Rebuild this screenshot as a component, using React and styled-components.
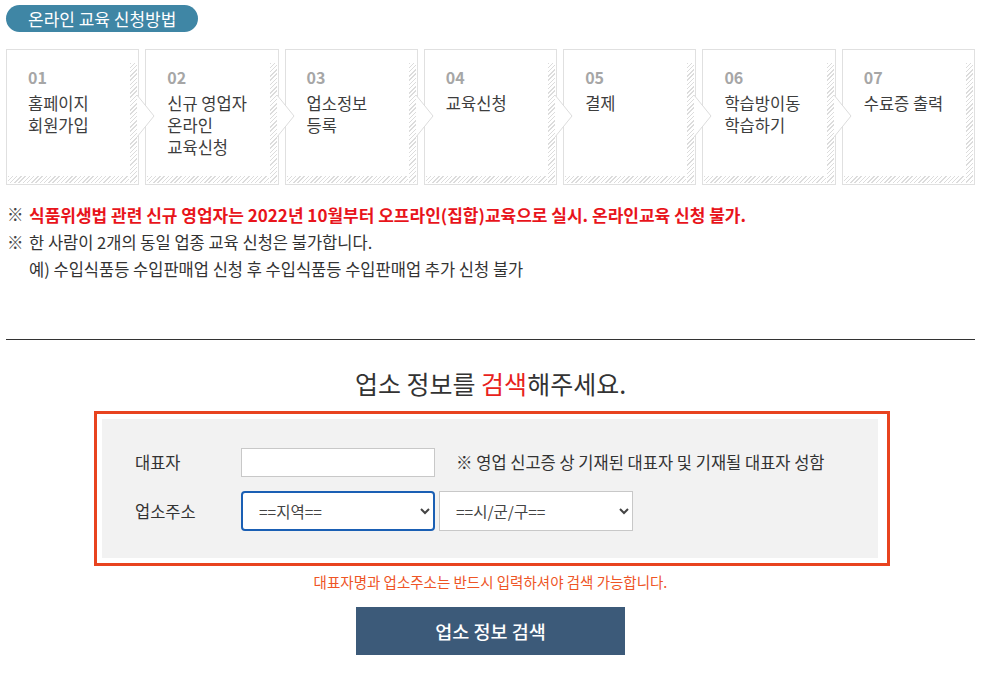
import React from "react"
import styled, { createGlobalStyle } from "styled-components"

const Global = createGlobalStyle`
  body{
    margin: 0;
    background-color: #fff;
    font-family: "Noto Sans CJK KR", "Noto Sans", sans-serif;
    color: #333;
  }
`

const Page = styled.div`
  width: 969px;
  padding: 5px 0 0 6px;
`

const Pill = styled.div`
  display: inline-flex;
  align-items: center;
  height: 27px;
  padding: 0 22px;
  border-radius: 14px;
  background-color: #3f86a5;
  color: #fff;
  font-size: 17px;
`

const Steps = styled.div`
  display: grid;
  grid-template-columns: repeat(7, 1fr);
  column-gap: 6px;
  margin-top: 17px;
`

const Step = styled.div`
  position: relative;
  height: 136px;
  box-sizing: border-box;
  border: 1px solid #e0e0e0;
  padding: 16px 0 0 21px;
  background:
    repeating-linear-gradient(135deg, #dcdcdc 0 1px, transparent 1px 3px) right 1px bottom 1px / 7px 120px no-repeat,
    repeating-linear-gradient(135deg, #dcdcdc 0 1px, transparent 1px 3px) left 1px bottom 1px / calc(100% - 10px) 7px no-repeat,
    #fff;
`

const Num = styled.div`
  font-size: 16px;
  font-weight: 700;
  color: #a6a6a6;
  line-height: 22px;
`

const Label = styled.div`
  margin-top: 4px;
  font-size: 16.5px;
  line-height: 22px;
  color: #3d3d3d;
  white-space: pre-line;
`

const Arrow = styled.svg`
  position: absolute;
  right: -18px;
  top: 45px;
  z-index: 2;
`

const Notes = styled.div`
  margin-top: 16px;
  font-size: 16.5px;
  line-height: 27.5px;
`

const NoteRow = styled.div`
  display: flex;
  color: ${p => (p.$red ? "#e8141b" : "#333")};
  font-weight: ${p => (p.$red ? 700 : 400)};
  font-size: ${p => (p.$red ? "17px" : "16.5px")};
`

const Mark = styled.span`
  width: 22px;
  flex: none;
  padding-left: 1px;
  color: #444;
  font-weight: 400;
  font-size: 16.5px;
`

const Rule = styled.hr`
  margin: 55px 0 0;
  border: 0;
  border-top: 1px solid #333;
`

const Title = styled.h2`
  margin: 27px 0 0;
  text-align: center;
  font-size: 25px;
  font-weight: 400;
  line-height: 33px;
  color: #333;
  span{
    color: #e8221c;
  }
`

const FormFrame = styled.div`
  margin: 11px 0 0 88px;
  width: 796px;
  box-sizing: border-box;
  border: 3px solid #e8431f;
  padding: 5px 9px 5px 5px;
`

const FormBox = styled.div`
  background-color: #f2f2f2;
  padding: 29px 0 27px 33px;
  display: flex;
  flex-direction: column;
  gap: 14px;
`

const Row = styled.div`
  display: flex;
  align-items: center;
`

const FieldLabel = styled.div`
  width: 106px;
  font-size: 16.5px;
  color: #333;
`

const TextInput = styled.input`
  width: 194px;
  height: 29px;
  box-sizing: border-box;
  border: 1px solid #c8c8c8;
  background: #fff;
  outline: none;
`

const Hint = styled.div`
  margin-left: 21px;
  font-size: 16.5px;
  color: #333;
`

const Select = styled.select`
  width: 194px;
  height: 40px;
  box-sizing: border-box;
  margin-right: 4px;
  padding: 0 10px 0 12px;
  border: ${p => (p.$active ? "2px solid #1a5fb4" : "1px solid #c8c8c8")};
  border-radius: ${p => (p.$active ? "4px" : "0")};
  background-color: #fff;
  font-family: "Noto Sans CJK KR", sans-serif;
  font-size: 15.5px;
  color: #444;
  outline: none;
`

const Warning = styled.div`
  margin-top: 6px;
  text-align: center;
  font-size: 14.5px;
  line-height: 20px;
  color: #ee5526;
`

const SearchButton = styled.button`
  display: block;
  margin: 15px auto 0;
  width: 269px;
  height: 48px;
  border: 0;
  background-color: #3c5a79;
  color: #fff;
  font-family: "Noto Sans CJK KR", sans-serif;
  font-size: 18.5px;
  font-weight: 500;
  cursor: pointer;
`

const steps = [
  ["01", "홈페이지\n회원가입"],
  ["02", "신규 영업자\n온라인\n교육신청"],
  ["03", "업소정보\n등록"],
  ["04", "교육신청"],
  ["05", "결제"],
  ["06", "학습방이동\n학습하기"],
  ["07", "수료증 출력"],
]

const App = () => (
  <Page>
    <Global />
    <Pill>온라인 교육 신청방법</Pill>
    <Steps>
      {steps.map(([n, t], i) => (
        <Step key={n}>
          <Num>{n}</Num>
          <Label>{t}</Label>
          {i < steps.length - 1 && (
            <Arrow width="19" height="42" viewBox="0 0 19 42">
              <polygon points="0,0 17,21 0,42" fill="#fff" />
              <polyline points="0,0 17,21 0,42" fill="none" stroke="#dcdcdc" strokeWidth="1" />
            </Arrow>
          )}
        </Step>
      ))}
    </Steps>
    <Notes>
      <NoteRow $red>
        <Mark>※</Mark>
        식품위생법 관련 신규 영업자는 2022년 10월부터 오프라인(집합)교육으로 실시. 온라인교육 신청 불가.
      </NoteRow>
      <NoteRow>
        <Mark>※</Mark>
        한 사람이 2개의 동일 업종 교육 신청은 불가합니다.
      </NoteRow>
      <NoteRow>
        <Mark />
        예) 수입식품등 수입판매업 신청 후 수입식품등 수입판매업 추가 신청 불가
      </NoteRow>
    </Notes>
    <Rule />
    <Title>
      업소 정보를 <span>검색</span>해주세요.
    </Title>
    <FormFrame>
      <FormBox>
        <Row>
          <FieldLabel>대표자</FieldLabel>
          <TextInput type="text" />
          <Hint>※ 영업 신고증 상 기재된 대표자 및 기재될 대표자 성함</Hint>
        </Row>
        <Row>
          <FieldLabel>업소주소</FieldLabel>
          <Select $active defaultValue="">
            <option value="">==지역==</option>
          </Select>
          <Select defaultValue="">
            <option value="">==시/군/구==</option>
          </Select>
        </Row>
      </FormBox>
    </FormFrame>
    <Warning>대표자명과 업소주소는 반드시 입력하셔야 검색 가능합니다.</Warning>
    <SearchButton>업소 정보 검색</SearchButton>
  </Page>
)

export default App
